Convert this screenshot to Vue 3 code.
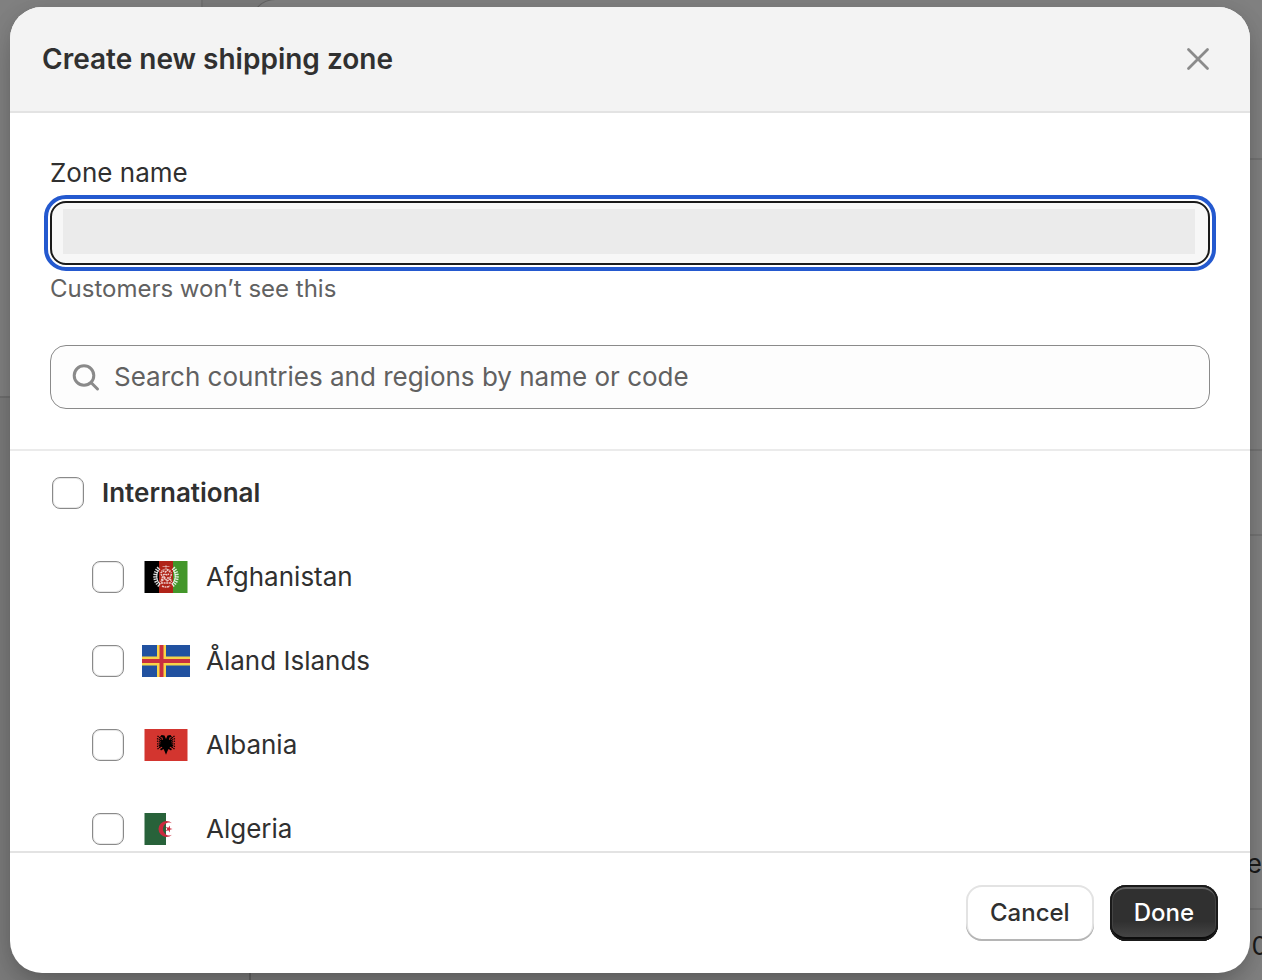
<script setup>
import { ref } from 'vue'

const zoneName = ref('')
const query = ref('')
const international = ref(false)
const countries = ref([
  { code: 'AF', name: 'Afghanistan', checked: false },
  { code: 'AX', name: 'Åland Islands', checked: false },
  { code: 'AL', name: 'Albania', checked: false },
  { code: 'DZ', name: 'Algeria', checked: false },
])
</script>

<template>
  <div class="page">
    <div class="backdrop" aria-hidden="true">
      <div class="side-line"></div>
      <div class="left-panel"></div>
      <div class="card-corner"></div>
      <div class="bottom-line"></div>
      <div class="rule rule-a"></div>
      <div class="rule rule-b"></div>
      <div class="rule rule-c"></div>
      <div class="rule rule-d"></div>
      <span class="peek peek-e">e</span>
      <span class="peek peek-o">0</span>
    </div>

    <section class="modal" role="dialog" aria-modal="true" aria-labelledby="title">
      <header class="header">
        <h2 id="title">Create new shipping zone</h2>
        <button class="close" type="button" aria-label="Close">
          <svg viewBox="0 0 40 40" width="40" height="40">
            <path d="M10.5 10.5L29.5 29.5M29.5 10.5L10.5 29.5" fill="none" stroke="#8a8a8a" stroke-width="2.8" stroke-linecap="round" />
          </svg>
        </button>
      </header>

      <div class="fields">
        <label class="label" for="zone">Zone name</label>
        <div class="zone-box">
          <input id="zone" v-model="zoneName" type="text" aria-describedby="zone-help" />
        </div>
        <p id="zone-help" class="help">Customers won’t see this</p>
        <div class="search-box">
          <svg viewBox="0 0 40 40" width="40" height="40" aria-hidden="true">
            <circle cx="18" cy="18.5" r="9.8" fill="none" stroke="#8a8a8a" stroke-width="3" />
            <path d="M25.500 26L31.500 32" stroke="#8a8a8a" stroke-width="3" stroke-linecap="round" />
          </svg>
          <input v-model="query" type="text" aria-label="Search countries and regions" placeholder="Search countries and regions by name or code" />
        </div>
      </div>

      <div class="list">
        <label class="row group">
          <input v-model="international" type="checkbox" />
          <span>International</span>
        </label>
        <label v-for="c in countries" :key="c.code" class="row country">
          <input v-model="c.checked" type="checkbox" />
          <svg v-if="c.code === 'AF'" class="flag" viewBox="0 0 48 32" aria-hidden="true">
            <rect x="2.5" width="15" height="32" fill="#000" />
            <rect x="17" width="14.5" height="32" fill="#b02318" />
            <rect x="31" width="14.5" height="32" fill="#43962a" />
            <g fill="none" stroke="#fff">
              <path d="M17 7C11.500 12 12 21 18.500 25M31 7C36.500 12 36 21 29.500 25" stroke-width="4" stroke-dasharray="1.300 1" opacity=".85" />
              <path d="M16.500 9C13.500 14 14.500 20 18 23M31.500 9C34.500 14 33.500 20 30 23" stroke-width="1.200" opacity=".7" />
              <path d="M20.500 5.500h7M24 4v4M19 10q5-4 10 0" stroke-width=".8" opacity=".6" />
              <path d="M18.500 12l3-2 2 1 2-2 4 3M19 13l1.500 3-1.500 5M29.500 13l-1.500 4 1.500 4M21 14l2-1 2 1 2-1M21 16h2m2 1h3M20 20l3-3 2 3 3-2M19 22h10M20 25q4 2 8 0" stroke-width="1.500" stroke-dasharray="2 .6" opacity=".75" />
            </g>
          </svg>
          <svg v-else-if="c.code === 'AX'" class="flag" viewBox="0 0 48 32" aria-hidden="true">
            <rect width="48" height="32" fill="#2151a0" />
            <path d="M0 16H48M19.500 0V32" stroke="#f8d347" stroke-width="9" />
            <path d="M0 16H48M19.500 0V32" stroke="#c9303e" stroke-width="4" />
          </svg>
          <svg v-else-if="c.code === 'AL'" class="flag" viewBox="0 0 48 32" aria-hidden="true">
            <rect x="2.500" width="43" height="32" fill="#d3352f" />
            <path d="M24 10L22.500 6.500L19.500 6L18 8L20.500 8.500L21 11L19 10L18.500 17L20.500 18.500L18 20L19 21.500L21.500 20L22.500 22L24 25.800L25.500 22L26.500 20L29 21.500L30 20L27.500 18.500L29.500 17L29 10L27 11L27.500 8.500L30 8L28.500 6L25.500 6.500Z" fill="#000" />
            <path d="M19.500 10L15.500 7M19.500 12L15 9.500M19.500 13.500L15 12M19.500 15L15 14.800M19.500 16L15 17.500M19.500 17L15.500 20M28.500 10L32.500 7M28.500 12L33 9.500M28.500 13.500L33 12M28.500 15L33 14.800M28.500 16L33 17.500M28.500 17L32.500 20" stroke="#000" stroke-width="1.300" stroke-dasharray="3 .6" />
          </svg>
          <svg v-else class="flag" viewBox="0 0 48 32" aria-hidden="true">
            <rect x="2.500" width="21.500" height="32" fill="#28623a" />
            <path d="M30 10.200A8 8 0 1 0 30 21.800A6.400 6.400 0 1 1 30 10.200Z" fill="#cb2a3e" />
            <path d="M30.500 16L27.900 16.800V19.500L26.300 17.300L23.700 18.200L25.300 16L23.700 13.800L26.300 14.700L27.900 12.500V15.200Z" fill="#cb2a3e" />
          </svg>
          <span>{{ c.name }}</span>
        </label>
      </div>

      <footer class="footer">
        <button class="btn cancel" type="button">Cancel</button>
        <button class="btn done" type="button">Done</button>
      </footer>
    </section>
  </div>
</template>

<style>
body {
  margin: 0;
  background: #7f7f7f;
}
</style>

<style scoped>
.page {
  position: relative;
  box-sizing: border-box;
  height: 100vh;
  padding: 7px 12px 7px 10px;
  overflow: hidden;
  background: #808080;
  color: #303030;
  font-family: Inter, "Liberation Sans", sans-serif;
  font-size: 26px;
  line-height: 40px;
}
.backdrop > * {
  position: absolute;
}
.side-line {
  left: 201px;
  top: 0;
  width: 80px;
  height: 40px;
  background: #7a7a7a;
  border-left: 2px solid #727272;
}
.card-corner {
  left: 251px;
  right: 0;
  top: -1px;
  height: 60px;
  border: 1px solid #656565;
  border-width: 1px 0 0 1px;
  border-radius: 24px 0 0 0;
  background: #808080;
}
.left-panel {
  left: 0;
  top: 396px;
  bottom: 0;
  width: 40px;
  border-top: 2px solid #6e6e6e;
  background: #7a7a7a;
}
.bottom-line {
  left: 249px;
  bottom: 0;
  width: 2px;
  height: 20px;
  background: #686868;
}
.rule {
  right: 0;
  width: 40px;
  height: 2px;
  background: #737373;
}
.rule-a { top: 158px; }
.rule-b { top: 449px; }
.rule-c { top: 534px; }
.rule-d { top: 908px; }
.peek {
  color: #1a1a1a;
}
.peek-e {
  top: 844px;
  right: 0;
}
.peek-o {
  top: 926px;
  right: -6px;
}
.modal {
  position: relative;
  display: flex;
  flex-direction: column;
  height: 100%;
  overflow: hidden;
  border-radius: 32px;
  background: #fff;
  box-shadow: 0 16px 32px -8px rgba(0, 0, 0, 0.3), 0 0 20px rgba(0, 0, 0, 0.08);
}
.header {
  display: flex;
  align-items: center;
  justify-content: space-between;
  padding: 32px;
  background: #f3f3f3;
  border-bottom: 2px solid #e3e3e3;
}
h2 {
  margin: 0;
  font-size: 28px;
  font-weight: 620;
}
.close {
  display: flex;
  padding: 0;
  border: 0;
  background: none;
}
.fields {
  display: flex;
  flex-direction: column;
  padding: 40px;
  border-bottom: 2px solid #ebebeb;
}
.zone-box {
  box-sizing: border-box;
  display: flex;
  height: 64px;
  margin: 8px 0;
  padding: 6px 13px 9px 11px;
  border: 2px solid #1a1a1a;
  border-radius: 16px;
  background: #f7f7f7;
  outline: 4px solid #2459cf;
  outline-offset: 2px;
}
input[type="text"] {
  flex: 1;
  min-width: 0;
  padding: 0;
  border: 0;
  outline: 0;
  background: none;
  color: #303030;
  font: inherit;
}
.zone-box input[type="text"] {
  background: #ebebeb;
}
.help {
  margin: 0 0 40px;
  color: #616161;
  font-size: 24px;
  line-height: 32px;
}
.search-box {
  box-sizing: border-box;
  display: flex;
  align-items: center;
  gap: 8px;
  height: 64px;
  padding: 0 15px;
  border: 1px solid #8a8a8a;
  border-radius: 16px;
  background: #fdfdfd;
}
.search-box input::placeholder {
  color: #616161;
  opacity: 1;
}
.list {
  flex: 1;
  min-height: 0;
  overflow: hidden;
}
.row {
  display: flex;
  align-items: center;
  height: 84px;
}
.group {
  gap: 18px;
  padding-left: 42px;
  font-weight: 580;
}
.country {
  padding-left: 82px;
}
.row input {
  appearance: none;
  box-sizing: border-box;
  width: 32px;
  height: 32px;
  margin: 0;
  border: 1px solid #8a8a8a;
  border-radius: 8px;
  background: #fff;
  box-shadow: inset 0 0 0 1px #e8e8e8;
}
.flag {
  width: 48px;
  height: 32px;
  margin: 0 16px 0 18px;
}
.footer {
  display: flex;
  justify-content: flex-end;
  gap: 16px;
  padding: 32px;
  border-top: 2px solid #e3e3e3;
}
.btn {
  height: 56px;
  padding: 0 24px;
  border: 0;
  border-radius: 16px;
  font: inherit;
  font-size: 24px;
  font-weight: 550;
}
.cancel {
  background: #fff;
  color: #303030;
  box-shadow: inset 0 -2px 0 #b5b5b5, inset 0 0 0 2px #e3e3e3;
}
.done {
  background: linear-gradient(#303030 65%, #4a4a4a);
  color: #fff;
  box-shadow: inset 0 0 0 2px #1a1a1a, inset 0 -4px 0 #0c0c0c, inset 0 4px 0 #606060, inset 0 0 0 3px #444;
}
</style>
